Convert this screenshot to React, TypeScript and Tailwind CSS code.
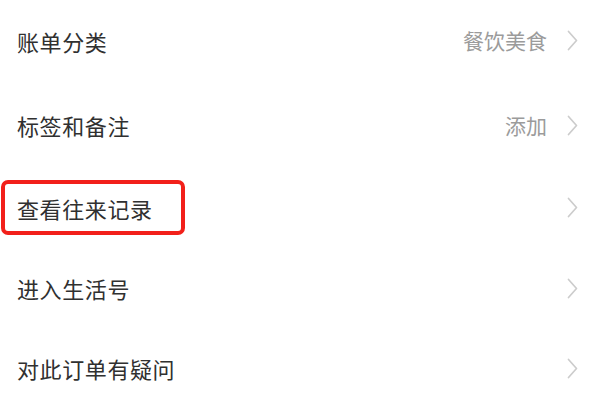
import React from "react";

const rows = [
  { label: "账单分类", value: "餐饮美食", h: "h-[85px]" },
  { label: "标签和备注", value: "添加", h: "h-[84px]" },
  { label: "查看往来记录", value: "", h: "h-[81px]", marked: true },
  { label: "进入生活号", value: "", h: "h-[80px]" },
  { label: "对此订单有疑问", value: "", h: "h-[80px]" },
];

function Chevron() {
  return (
    <svg width="11" height="21" viewBox="0 0 11 21" className="shrink-0">
      <polyline points="1.5,1.5 9.5,10.5 1.5,19.5" fill="none" stroke="#cccccc" strokeWidth="1.7" strokeLinecap="round" strokeLinejoin="round" />
    </svg>
  );
}

export default function App() {
  return (
    <div
      className="w-[600px] h-[420px] bg-white overflow-hidden"
      style={{ fontFamily: '"Noto Sans CJK SC", "Noto Sans", sans-serif' }}
    >
      <div className="-mt-[2px]">
        {rows.map((r) => (
          <div key={r.label} className={`relative flex items-center ${r.h} pl-[17px] pr-[22px]`}>
            <span className="text-[22px] leading-none text-[#303030] tracking-[0.6px]">{r.label}</span>
            <div className="ml-auto flex items-center gap-[20px]">
              {r.value && <span className="text-[21px] leading-none text-[#9b9b9b]">{r.value}</span>}
              <Chevron />
            </div>
            {r.marked && (
              <div className="absolute left-[1px] top-[13px] w-[184px] h-[55px] border-[4px] border-[#f2201a] rounded-[7px]" />
            )}
          </div>
        ))}
      </div>
    </div>
  );
}
